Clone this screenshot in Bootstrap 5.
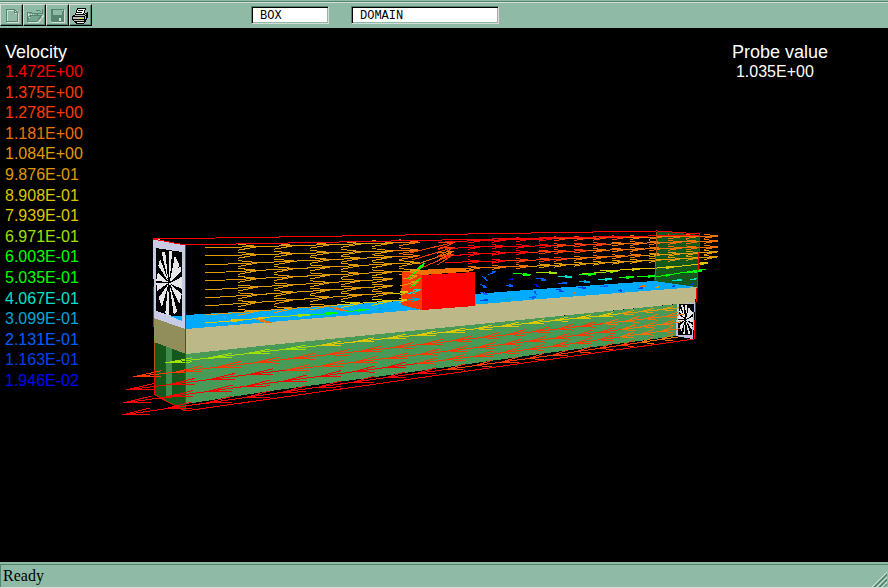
<!DOCTYPE html>
<html lang="en">
<head>
<meta charset="utf-8">
<meta name="viewport" content="width=device-width, initial-scale=1">
<title>Flow viewer</title>
<link href="https://cdn.jsdelivr.net/npm/bootstrap@5.3.0/dist/css/bootstrap.min.css" rel="stylesheet">
<style>
:root { --face: #8fbba6; --shade: #54866f; --light: #d6dcd8; }
body { background: #000; font-family: "Liberation Sans", Arial, sans-serif; }
.toolbar { background: var(--face); height: 28px; border-top: 1px solid var(--face); padding-top: 3px; box-shadow: inset 0 1px var(--shade), inset 0 2px var(--light); }
.tool { width: 23px; height: 22px; background: var(--face); border: 1px solid var(--light); border-right-color: #000; border-bottom-color: #000; box-shadow: inset -1px -1px var(--shade); }
.tool svg { display: block; }
.field { height: 18px; background: #fff; color: #000; border: 1px solid var(--shade); border-right-color: var(--light); border-bottom-color: var(--light); border-radius: 0; box-shadow: inset 1px 1px #000, inset -1px -1px var(--face); font: 12px/16px "Liberation Mono", "Courier New", monospace; padding: 2px 8px 0; }
.field-object { width: 78px; }
.field-domain { width: 148px; }
.fields { gap: 22px; margin-left: 159px; padding-top: 2px; }
.view { min-height: 400px; }
.readout { font-size: 16px; line-height: 20px; padding: 14px 60px 0 5px; color: #fff; }
.caption { font-size: 18px; line-height: 20px; }
.scale-list { height: 329px; }
.probe-number { padding-left: 4px; }
.status { background: var(--face); height: 26px; color: #000; font: 16px/20px "Liberation Serif", "Times New Roman", serif; border-bottom: 1px solid var(--light); box-shadow: inset 0 2px var(--face), inset 1px 3px var(--shade); padding: 4px 0 0 3px; }
</style>
<script src="https://cdn.jsdelivr.net/npm/bootstrap@5.3.0/dist/js/bootstrap.bundle.min.js"></script>
</head>
<body class="d-flex flex-column vh-100 overflow-hidden">
<header class="toolbar d-flex align-items-start flex-shrink-0">
  <div class="d-flex" role="toolbar" aria-label="File">
    <button type="button" class="tool p-0" aria-label="New"><svg width="20" height="19" shape-rendering="crispEdges" fill="none"><path d="M6.500 4.500H14.500L17.500 7.500V16.500H6.500ZM14.500 4.500V7.500H17.500" stroke="#d6dcd8"/><path d="M5.500 3.500H13.500L16.500 6.500V15.500H5.500ZM13.500 3.500V6.500H16.500" stroke="#54866f"/></svg></button>
    <button type="button" class="tool p-0" aria-label="Open"><svg width="20" height="19" shape-rendering="crispEdges"><path d="M4 16H15L20 9" fill="none" stroke="#d6dcd8"/><path d="M3 6H7L8 7H13V9H18L13 15H3Z" fill="#76a68f" stroke="#54866f"/><path d="M4 14L7 9H18M12 4H15L17 6M18 3V7H14" fill="none" stroke="#54866f"/><path d="M4 7h1v1h1v1h-1v1h-1zM7 8h1v1h-1zM9 8h1v1h-1zM5 11h1v1h-1z" fill="#d6dcd8"/></svg></button>
    <button type="button" class="tool p-0" aria-label="Save"><svg width="20" height="19" shape-rendering="crispEdges"><path d="M5 4H18V17H5Z" fill="#d6dcd8"/><path d="M4 3H17V16H5L4 15Z" fill="#54866f"/><path d="M6 4H15V9H6Z" fill="#8fbba6"/><path d="M12 12H14V15H12ZM15 4H16V5H15Z" fill="#d6dcd8"/></svg></button>
    <button type="button" class="tool p-0" aria-label="Print"><svg width="20" height="19" shape-rendering="crispEdges"><path d="M7.500 2.500H15.500L13.500 8.500H5.500Z" fill="#fff" stroke="#000"/><path d="M8 4.500H13M7 6.500H12" stroke="#000"/><path d="M5.500 8.500H14.500L17.500 6.500V11.500L14.500 15.500H4.500L2.500 13.500V10.500Z" fill="#b7bdb9" stroke="#000"/><path d="M2.500 10.500H14.500V15M14.500 10.500L17.500 7.500M3 13.500H14M16.500 8V13" fill="none" stroke="#000"/><path d="M9 12h3v1h-3z" fill="#e7dd00"/><path d="M5.500 15.500L6.500 17.500H13.500L15.500 15.500" fill="#fff" stroke="#000"/></svg></button>
  </div>
  <div class="fields d-flex">
    <input class="field field-object" type="text" value="BOX" aria-label="Object">
    <input class="field field-domain" type="text" value="DOMAIN" aria-label="Object type">
  </div>
</header>
<main class="view position-relative flex-grow-1">
  <svg class="position-absolute top-0 start-0 w-100 h-100" viewBox="0 28 888 534" preserveAspectRatio="xMinYMin meet" shape-rendering="crispEdges" role="img" aria-label="Velocity vectors in the domain">
    <defs>
      <symbol id="fan" viewBox="108 86 76 202" preserveAspectRatio="none">
        <path fill="#e6e6e8" d="M124 95L135 95L144 184ZM145 90L155 93L148 186ZM163 106L177 135L148 188ZM172 143L182 138V153L150 186ZM183 170V206L147 190ZM183 222L176 252L148 190ZM170 275L160 284L147 190ZM146 286L135 280L144 190ZM125 262L116 232L145 190ZM112 212L109 190L145 188ZM109 181L113 157L145 187ZM115 137L120 116L145 186Z"/>
      </symbol>
    </defs>
    <path fill="#14581c" d="M657 231L700 235L697 288L654 283Z"/>
    <path fill="#00aaff" d="M186 315L270 310L400 301L475 294L540 289L654 281L697 287L540 300L186 329Z"/>
    <path fill="#bcb888" d="M186 329L270 322L390 312L540 299L697 287L695 303L677 304L540 318L390 333L270 345L186 354Z"/>
    <path fill="#4a9a57" d="M186 354L270 345L390 333L540 318L678 304L677 336L540 354L390 375L270 391L186 404Z"/>
    <path fill="#14581c" d="M154 342L186 354V411L154 395Z"/>
    <path fill="#3f8c4c" d="M166 346L172 348V398L166 396Z"/>
    <path fill="#928e5c" d="M154 318L186 329V354L154 342Z"/>
    <path fill="#c8cbe4" d="M153 238L185 245V329L154 318Z"/>
    <path fill="#000" d="M156 248L182 252V319L156 311Z"/>
    <path fill="#00aaff" d="M170 316H182V321Z"/>
    <use href="#fan" x="156" y="249" width="26" height="67"/>
    <path fill="#b9bfdf" d="M677 304L695 303L693 339L676 336Z"/>
    <path fill="#000" d="M679 304H694L692 335H678Z"/>
    <use href="#fan" x="678" y="304" width="15" height="31"/>
    <g id="rowsBehind" fill="none"></g>
    <path fill="#ff3a00" d="M402 271L422 274V310L401 305Z"/>
    <path fill="#f07000" d="M402 271L455 268L476 271L422 275Z"/>
    <path fill="#f00" d="M422 275L475 272V306L422 310Z"/>
    <g id="rowsFront" fill="none"></g>
    <g fill="none" stroke="#f00">
      <path d="M153 239L657 231L700 234L697 288L696 302L694 339L185 411V245L153 239"/>
      <path d="M185 245L700 235M153 286L154 327M154 370L155 395L185 411"/>
      <path stroke="#b05a00" d="M154 342V370M657 232L655 281"/>
    </g>
  </svg>
  <div class="readout position-relative d-flex justify-content-between align-items-start">
    <section>
      <div class="caption">Velocity</div>
      <ul id="scaleList" class="scale-list list-unstyled d-flex flex-column justify-content-between mb-0"></ul>
    </section>
    <section>
      <div class="caption">Probe value</div>
      <div class="probe-number">1.035E+00</div>
    </section>
  </div>
</main>
<footer class="status d-flex justify-content-between flex-shrink-0">
  <span>Ready</span>
  <svg width="17" height="22" shape-rendering="crispEdges" aria-hidden="true"><path d="M1 21L16 6M6 21L16 11M11 21L16 16" stroke="#d6dcd8" stroke-width="1"/><path d="M3 21L16 8M4 21L16 9M8 21L16 13M9 21L16 14M13 21L16 18" stroke="#54866f" stroke-width="1"/></svg>
</footer>
<script>
const C = { r: '#ff0000', v: '#ff3a00', o: '#f07000', a: '#e09a00', y: '#ddc800', l: '#a0e000', g: '#00ff00', t: '#00e0c8', c: '#00a6d6', b: '#0060ff', d: '#0040e8', n: '#0000ff' };
const levels = [['1.472E+00','r'],['1.375E+00','v'],['1.278E+00','v'],['1.181E+00','o'],['1.084E+00','a'],['9.876E-01','a'],['8.908E-01','y'],['7.939E-01','y'],['6.971E-01','l'],['6.003E-01','g'],['5.035E-01','g'],['4.067E-01','t'],['3.099E-01','c'],['2.131E-01','b'],['1.163E-01','d'],['1.946E-02','n']];
for (const [value, key] of levels) {
  const item = document.createElement('li');
  item.textContent = value;
  item.style.color = C[key];
  document.getElementById('scaleList').append(item);
}
const behind = document.getElementById('rowsBehind'), front = document.getElementById('rowsFront');
function stroke(parent, d, key) {
  const p = document.createElementNS('http://www.w3.org/2000/svg', 'path');
  p.setAttribute('d', d);
  p.setAttribute('stroke', C[key]);
  parent.append(p);
}
// height of a streamline, given its corner points
function at(points, x) {
  let i = 0;
  while (i < points.length - 2 && x > points[i + 1][0]) i++;
  const [x0, y0] = points[i], [x1, y1] = points[i + 1];
  return y0 + (y1 - y0) * (x - x0) / (x1 - x0);
}
// arrow with two open barbs; size is barb length, spread its half width
function arrow(parent, x0, y0, x1, y1, key, size, spread) {
  const s = Math.sign(x1 - x0), bx = x1 - s * size, k = (y1 - y0) / (x1 - x0), by = y1 - s * size * k;
  stroke(parent, `M${x0} ${y0}L${x1} ${y1}M${bx} ${by - spread}L${x1} ${y1}L${bx} ${by + spread}`, key);
}
// upstream of the box
const left = [[248,243],[256,251],[265,257],[273,264],[281,272],[290,279],[298,286],[306,293],[315,301]];
const tips = [205,259,295,331,362,393,420];
left.forEach(([a, b], i) => {
  const line = [[205, a], [390, b]];
  for (let j = 1; j < tips.length - (i > 4 ? 1 : 0); j++) {
    const key = i === 8 && j > 3 ? 'y' : j === 6 ? (i < 3 ? 'o' : 'a') : 'a';
    arrow(behind, tips[j - 1], at(line, tips[j - 1]), tips[j], at(line, tips[j]), key, 21, 3);
  }
});
// above and behind the box
const right = [
  { p: [[420,242],[470,241],[540,239],[718,236]], k: 'vrrrrvvvvooooo' },
  { p: [[432,252],[452,247],[540,246],[718,241]], k: 'vrrrrvvvoooooo' },
  { p: [[430,261],[452,254],[540,252],[716,247]], k: 'vrrrvvvooooooo' },
  { p: [[440,263],[452,262],[540,260],[716,252]], k: 'vrrvvvooooaaaa' },
  { p: [[440,269],[470,268],[540,266],[714,257]], k: 'ooooaaaaaaaaaa' },
];
const stops = [445,482,506,530,553,568,588,607,626,644,663,682,700,718];
right.forEach(({ p, k }) => {
  for (let j = 1; j < stops.length; j++)
    arrow(behind, stops[j - 1], at(p, stops[j - 1]), stops[j], at(p, stops[j]), k[j], 14, 2);
});
[[582,274,618,271,'l'],[600,271,640,269,'y'],[640,269,674,267,'y'],[674,267,708,263,'y'],[513,273,531,275,'g'],[536,272,557,273,'l'],[579,275,596,274,'g'],[619,278,634,277,'g'],[637,277,656,276,'g'],[654,277,674,274,'g'],[674,274,706,269,'g'],[684,273,702,271,'g'],[558,276,572,277,'t'],[598,280,612,279,'t'],[672,280,682,280,'t'],[690,280,698,278,'t'],[579,281,590,282,'c'],[501,299,512,299,'c'],[536,278,546,280,'b'],[558,283,567,283,'b'],[488,275,496,271,'b'],[482,276,488,281,'b'],[480,284,487,288,'b'],[480,292,488,295,'b'],[480,300,488,300,'d'],[534,284,539,287,'n'],[509,279,513,279,'n'],[506,285,513,286,'b'],[534,291,536,294,'d'],[529,298,536,297,'b'],[556,289,562,291,'d'],[578,287,586,288,'d'],[600,286,608,286,'b'],[618,290,622,291,'d'],[638,288,643,288,'d'],[672,286,675,286,'d'],[689,284,693,284,'d'],[640,286,645,286,'o'],[655,287,659,287,'a'],[573,293,576,293,'o']].forEach(([x0, y0, x1, y1, key]) =>
  arrow(behind, x0, y0, x1, y1, key, Math.min(8, (x1 - x0) / 2), 1));
// jet lifting over the leading edge
[[410,253,455,242,'v'],[412,260,455,247,'v'],[418,264,454,251,'o'],[421,268,454,254,'v']].forEach(([x0, y0, x1, y1, key]) => {
  arrow(behind, x0, y0, x1, y1, key, 17, 4);
});
[[408,279,425,263,'g'],[410,288,421,278,'g'],[400,286,419,281,'a'],[392,294,408,292,'y'],[408,294,421,289,'t'],[408,300,420,299,'c'],[392,301,407,300,'y'],[403,272,419,270,'a'],[403,279,417,276,'a']].forEach(([x0, y0, x1, y1, key]) =>
  arrow(front, x0, y0, x1, y1, key, 8, 2));
// near the floor, upstream
[[205,323,243,320,'y'],[243,320,270,317,'y'],[270,317,310,315,'l'],[310,315,338,313,'g'],[345,312,370,309,'g'],[255,319,272,323,'o'],[330,307,347,311,'o'],[379,309,390,308,'c']].forEach(([x0, y0, x1, y1, key]) =>
  arrow(front, x0, y0, x1, y1, key, 12, 1));
// return flow under the plate, running right to left
const under = [
  { p: [[165,363],[270,351],[390,338],[540,322],[687,307]], k: 'llllyyyyyyyyyyyaaaaaaa', s: 2 },
  { p: [[133,377],[270,361],[390,348],[540,331],[687,314]], k: 'vvvvvvvvvvvvvvvooooaaaa', s: 3 },
  { p: [[126,390],[270,372],[390,358],[540,340],[687,321]], k: 'rrrrvvvvvvvvvvvvooooaaa', s: 3 },
  { p: [[123,403],[270,383],[390,367],[540,348],[685,328]], k: 'rrrrrrrrvvvvvvvvooooaaa', s: 3 },
  { p: [[122,415],[270,394],[390,377],[540,357],[685,336]], k: 'rrrrrrrrrvvvvvvvvoooaaa', s: 3 },
];
under.forEach(({ p, k, s }) => {
  let x = p[0][0], j = 0;
  while (x < p[4][0] - 8) {
    const step = Math.max(19, 43 - (x - 122) * .045), next = Math.min(x + step, p[4][0]);
    arrow(front, next, at(p, next), x, at(p, x), k[j++] || 'a', step * .65, s);
    x = next;
  }
});
</script>
</body>
</html>
